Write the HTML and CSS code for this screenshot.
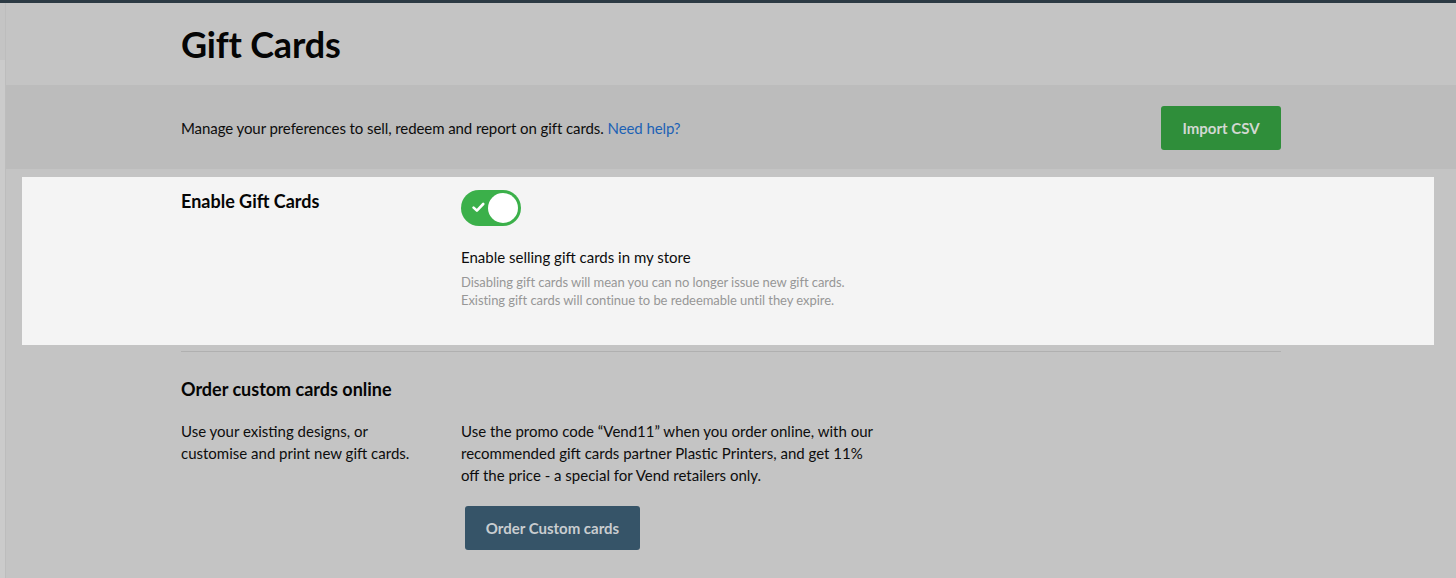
FILE: index.html
```html
<!DOCTYPE html>
<html lang="en">
<head>
<meta charset="utf-8">
<title>Gift Cards</title>
<link rel="stylesheet" href="styles.css">
</head>
<body>
<div class="topbar"></div>
<div class="shell">
  <aside class="sidebar"></aside>
  <main class="main">
    <header class="page-header">
      <div class="container">
        <h1 class="page-title">Gift Cards</h1>
      </div>
    </header>
    <section class="band">
      <div class="container band-inner">
        <p class="band-text">Manage your preferences to sell, redeem and report on gift cards. <a class="link" href="#">Need help?</a></p>
        <button class="btn btn-green">Import CSV</button>
      </div>
    </section>
    <section class="highlight">
      <div class="highlight-inner">
        <h2 class="section-label">Enable Gift Cards</h2>
        <div class="setting">
          <div class="toggle">
            <svg class="toggle-check" width="13" height="11" viewBox="0 0 13 11"><path d="M1.6 5.6 L4.9 8.6 L11.2 2" fill="none" stroke="#fff" stroke-width="2.6" stroke-linecap="round" stroke-linejoin="round"/></svg>
            <span class="toggle-knob"></span>
          </div>
          <p class="setting-title">Enable selling gift cards in my store</p>
          <p class="setting-help">Disabling gift cards will mean you can no longer issue new gift cards.<br>Existing gift cards will continue to be redeemable until they expire.</p>
        </div>
      </div>
    </section>
    <div class="container divider"></div>
    <section class="container order">
      <h2 class="order-title">Order custom cards online</h2>
      <div class="order-grid">
        <p class="order-text">Use your existing designs, or<br>customise and print new gift cards.</p>
        <div class="order-right">
          <p class="order-text">Use the promo code “Vend11” when you order online, with our recommended gift cards partner Plastic Printers, and get 11% off the price - a special for Vend retailers only.</p>
          <button class="btn btn-slate">Order Custom cards</button>
        </div>
      </div>
    </section>
  </main>
</div>
</body>
</html>
```

FILE: styles.css
```css
* { box-sizing: border-box; }
html, body { margin: 0; padding: 0; }
body {
  background: #c4c4c4;
  font-family: Lato, "Open Sans", "Liberation Sans", sans-serif;
  color: #0d0d0d;
  height: 578px;
  overflow: hidden;
}
p, h1, h2 { margin: 0; }

.topbar { height: 3px; background: #2c3a44; }

.shell { display: flex; min-height: 575px; }
.sidebar {
  width: 6px;
  flex: 0 0 6px;
  border-right: 1px solid #bdbdbd;
  background: linear-gradient(#c4c4c4 0, #c4c4c4 57px, #cbcbcb 57px);
}
.main { flex: 1; min-width: 0; }

.container { width: 1100px; margin: 0 auto; }

.page-header { height: 82px; padding-top: 19px; }
.page-title {
  font-size: 36px;
  line-height: 44px;
  font-weight: 700;
  color: #050505;
  letter-spacing: -0.2px;
}

.band { background: #bcbcbc; height: 84px; }
.band-inner {
  height: 100%;
  padding-top: 2px;
  display: flex;
  align-items: center;
  justify-content: space-between;
}
.band-text { font-size: 15px; line-height: 22px; color: #0d0d0d; letter-spacing: -0.08px; }
.link { color: #1d62b5; text-decoration: none; }

.btn {
  font-family: Lato, "Open Sans", "Liberation Sans", sans-serif;
  font-size: 15px;
  font-weight: 700;
  border: 0;
  border-radius: 3px;
  height: 44px;
  padding: 0;
  cursor: pointer;
}
.btn-green { background: #2f8e3a; width: 120px; color: #d2d8d2; }
.btn-slate { background: #365468; width: 175px; color: #c9cdd0; margin: 20px 0 0 4px; }

.highlight {
  margin: 8px 22px 0 16px;
  height: 168px;
  background: #f4f4f4;
}
.highlight-inner {
  margin-left: 159px;
  padding-top: 12px;
  display: flex;
}
.section-label {
  width: 280px;
  font-size: 18px;
  line-height: 24px;
  font-weight: 700;
  color: #050505;
}
.setting { padding-top: 1px; }
.toggle {
  position: relative;
  width: 60px;
  height: 36px;
  border-radius: 18px;
  background: #3bb04a;
}
.toggle-check { position: absolute; left: 11px; top: 12px; }
.toggle-knob {
  position: absolute;
  right: 3px;
  top: 3px;
  width: 30px;
  height: 30px;
  border-radius: 50%;
  background: #fff;
}
.setting-title {
  margin-top: 20px;
  font-size: 15px;
  line-height: 22px;
  color: #0d0d0d;
}
.setting-help {
  margin-top: 5px;
  font-size: 13px;
  line-height: 18px;
  color: #979797;
  letter-spacing: -0.06px;
}

.divider { margin-top: 6px; height: 1px; background: #b0b0b0; }

.order { padding-top: 25px; }
.order-title {
  font-size: 18px;
  line-height: 24px;
  font-weight: 700;
  color: #050505;
}
.order-grid { display: flex; margin-top: 19px; }
.order-grid > .order-text { width: 280px; }
.order-right { width: 420px; }
.order-text { font-size: 15px; line-height: 22px; color: #0d0d0d; }
```
